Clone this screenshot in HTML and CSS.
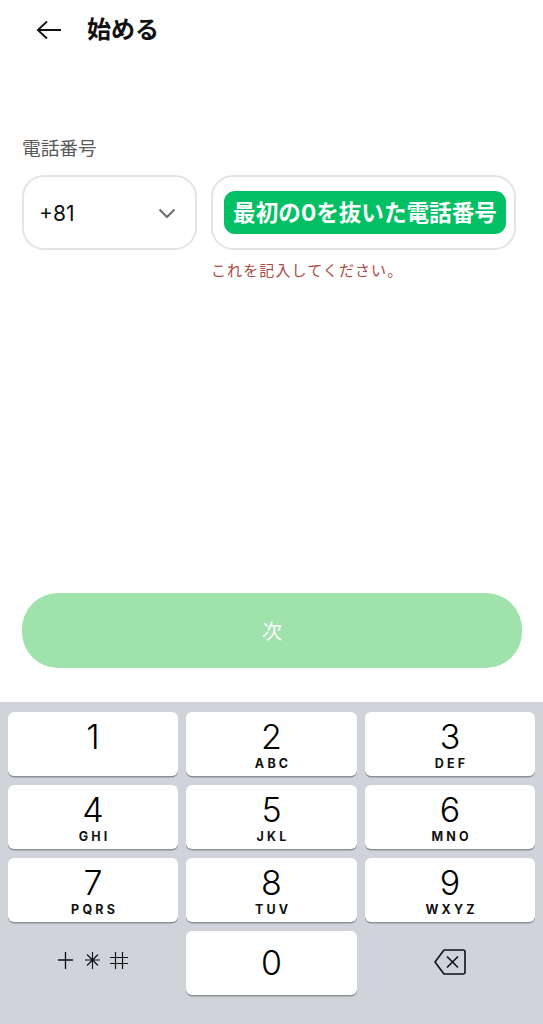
FILE: index.html
```html
<!DOCTYPE html>
<html lang="ja">
<head>
    <meta charset="UTF-8">
    <meta name="viewport" content="width=device-width, initial-scale=1.0">
    <title>始める</title>
    <link rel="stylesheet" href="styles.css">
</head>
<body>
    <div class="page">
        <header class="header">
            <svg class="back-icon" viewBox="0 0 26 20" width="26" height="20">
                <path d="M25 10H2M11 1.5 1.8 10l9.2 8.5" fill="none" stroke="#111" stroke-width="1.8"/>
            </svg>
            <h1>始める</h1>
        </header>

        <main class="form">
            <label class="field-label">電話番号</label>
            <div class="field-row">
                <div class="field country">
                    <span>+81</span>
                    <svg class="chevron" viewBox="0 0 18 11" width="18" height="11">
                        <path d="M1.5 1.5 9 9l7.5-7.5" fill="none" stroke="#6b6b6b" stroke-width="2"/>
                    </svg>
                </div>
                <div class="phone-col">
                    <div class="field phone">
                        <span class="hint">最初の0を抜いた電話番号</span>
                    </div>
                    <p class="error">これを記入してください。</p>
                </div>
            </div>
        </main>

        <button class="next-btn">次</button>

        <!-- テンキー -->
        <div class="keypad">
            <div class="key"><span class="num">1</span></div>
            <div class="key"><span class="num">2</span><span class="letters">ABC</span></div>
            <div class="key"><span class="num">3</span><span class="letters">DEF</span></div>
            <div class="key"><span class="num">4</span><span class="letters">GHI</span></div>
            <div class="key"><span class="num">5</span><span class="letters">JKL</span></div>
            <div class="key"><span class="num">6</span><span class="letters">MNO</span></div>
            <div class="key"><span class="num">7</span><span class="letters">PQRS</span></div>
            <div class="key"><span class="num">8</span><span class="letters">TUV</span></div>
            <div class="key"><span class="num">9</span><span class="letters">WXYZ</span></div>
            <div class="key-plain symbols">
                <svg viewBox="0 0 72 20" width="72" height="20">
                    <path d="M1 10h15M8.500 2v17" fill="none" stroke="#111" stroke-width="1.3"/>
                    <path d="M28 10h15M35.500 2v17M30 4.500l11 11M41 4.500 30 15.500" fill="none" stroke="#111" stroke-width="1.1"/>
                    <path d="M53 7.500h18M53 13.500h18M58.500 2v17M65.500 2v17" fill="none" stroke="#111" stroke-width="1.2"/>
                </svg>
            </div>
            <div class="key zero"><span class="num">0</span></div>
            <div class="key-plain">
                <svg viewBox="0 0 32 26" width="32" height="26">
                    <path d="M10 1h19a2 2 0 0 1 2 2v20a2 2 0 0 1-2 2H10L1 13z" fill="none" stroke="#111" stroke-width="1.6" stroke-linejoin="round"/>
                    <path d="M13 7.500l11 11M24 7.500l-11 11" fill="none" stroke="#111" stroke-width="1.6"/>
                </svg>
            </div>
        </div>
    </div>
</body>
</html>
```

FILE: styles.css
```css
* {
    box-sizing: border-box;
}
body {
    margin: 0;
    background: #fff;
    color: #111;
    font-family: "Inter", "Noto Sans CJK JP", sans-serif;
}
.page {
    display: flex;
    flex-direction: column;
    height: 1024px;
    overflow: hidden;
}
.header {
    display: flex;
    align-items: center;
    gap: 25px;
    height: 60px;
    padding-left: 36px;
}
.header h1 {
    margin: 0;
    font-size: 24px;
    font-weight: 700;
    line-height: 60px;
}
.form {
    flex: 1;
    padding: 77px 27px 0 22px;
}
.field-label {
    display: block;
    height: 38px;
    font-size: 18.700px;
    line-height: 24px;
    color: #595959;
}
.field-row {
    display: flex;
    gap: 14px;
}
.field {
    display: flex;
    align-items: center;
    height: 75px;
    background: #fff;
    border: 2px solid #e4e4e4;
    border-radius: 22px;
}
.country {
    flex: none;
    justify-content: space-between;
    width: 175px;
    padding: 2px 19px 0 15px;
    font-size: 21px;
}
.phone-col {
    flex: 1;
}
.phone {
    padding-left: 11px;
}
.hint {
    width: 282px;
    height: 43px;
    background: #00c063;
    border-radius: 11px;
    color: #fff;
    font-size: 22.600px;
    font-weight: 700;
    line-height: 43px;
    text-align: center;
    white-space: nowrap;
}
.error {
    margin: 10px 0 0;
    font-size: 15px;
    line-height: 22px;
    letter-spacing: 1.100px;
    color: #ae4a45;
}
.next-btn {
    display: block;
    width: 500px;
    height: 75px;
    margin: 0 0 34px 22px;
    background: #9fe2ac;
    border: none;
    border-radius: 36px;
    color: #fff;
    font-family: inherit;
    font-size: 20px;
}
.keypad {
    display: grid;
    grid-template-columns: 170px 171px 170px;
    grid-auto-rows: 64px;
    gap: 9px 8px;
    height: 322px;
    padding: 10px 8px 0;
    background: #d0d3d9;
}
.key,
.key-plain {
    display: flex;
    flex-direction: column;
    align-items: center;
}
.key {
    background: #fff;
    border-radius: 6px;
    box-shadow: 0 1.5px 0 #8e9095;
}
.key-plain {
    justify-content: center;
    padding-bottom: 3px;
}
.key-plain.symbols {
    padding-bottom: 6px;
}
.num {
    font-size: 34px;
    font-weight: 350;
    line-height: 40px;
    margin-top: 4.500px;
    color: #000;
}
.zero .num {
    margin-top: 11.500px;
}
.letters {
    font-size: 12.500px;
    font-weight: 700;
    line-height: 14px;
    letter-spacing: 3.200px;
    margin-right: -3.200px;
}
```
